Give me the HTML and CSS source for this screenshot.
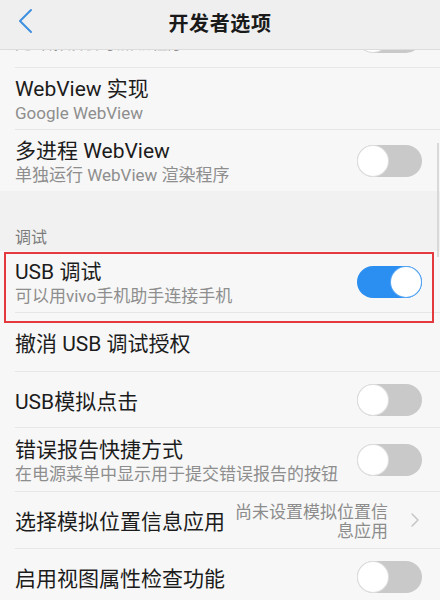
FILE: index.html
```html
<!DOCTYPE html>
<html lang="zh-CN">
<head>
<meta charset="utf-8">
<title>开发者选项</title>
<link rel="stylesheet" href="styles.css">
</head>
<body>
<header class="topbar">
  <span class="back">
    <svg width="16" height="26" viewBox="0 0 16 26"><path d="M13 2 L2 13 L13 24" fill="none" stroke="#3f8fe0" stroke-width="2" stroke-linecap="round" stroke-linejoin="round"/></svg>
  </span>
  <h1 class="title">开发者选项</h1>
</header>
<main class="viewport">
  <div class="list">
    <div class="row row-double r-top">
      <div class="text">
        <div class="label">OEM 解锁</div>
        <div class="desc">允许解锁引导加载程序</div>
      </div>
      <span class="switch"><span class="knob"></span></span>
    </div>
    <div class="row row-double">
      <div class="text">
        <div class="label">WebView 实现</div>
        <div class="desc">Google WebView</div>
      </div>
    </div>
    <div class="row row-double row-last">
      <div class="text">
        <div class="label">多进程 WebView</div>
        <div class="desc">单独运行 WebView 渲染程序</div>
      </div>
      <span class="switch"><span class="knob"></span></span>
    </div>
    <div class="section">调试</div>
    <div class="row row-double">
      <div class="text">
        <div class="label">USB 调试</div>
        <div class="desc">可以用vivo手机助手连接手机</div>
      </div>
      <span class="switch on"><span class="knob"></span></span>
    </div>
    <div class="row row-single r-revoke">
      <div class="text"><div class="label">撤消 USB 调试授权</div></div>
    </div>
    <div class="row row-single r-tap">
      <div class="text"><div class="label">USB模拟点击</div></div>
      <span class="switch"><span class="knob"></span></span>
    </div>
    <div class="row row-double r-bug">
      <div class="text">
        <div class="label">错误报告快捷方式</div>
        <div class="desc">在电源菜单中显示用于提交错误报告的按钮</div>
      </div>
      <span class="switch"><span class="knob"></span></span>
    </div>
    <div class="row row-single r-mock">
      <div class="text"><div class="label">选择模拟位置信息应用</div></div>
      <div class="value"><span class="vline">尚未设置模拟位置信</span><span class="vline">息应用</span></div>
      <span class="chev">
        <svg width="10" height="16" viewBox="0 0 10 16"><path d="M2 2 L8 8 L2 14" fill="none" stroke="#c6c6c6" stroke-width="1.5" stroke-linecap="round" stroke-linejoin="round"/></svg>
      </span>
    </div>
    <div class="row row-single">
      <div class="text"><div class="label">启用视图属性检查功能</div></div>
      <span class="switch"><span class="knob"></span></span>
    </div>
  </div>
</main>
<div class="highlight"></div>
<div class="scrollbar"></div>
</body>
</html>
```
FILE: styles.css
```css
* { box-sizing: border-box; }
html, body { margin: 0; padding: 0; }
body {
  width: 440px;
  height: 600px;
  overflow: hidden;
  position: relative;
  background: #f7f7f7;
  font-family: Roboto, "Noto Sans CJK SC", sans-serif;
  color: #1c1c1c;
}
.topbar {
  height: 50px;
  background: #efefef;
  border-bottom: 1px solid #dcdcdc;
  display: flex;
  align-items: center;
  justify-content: center;
  position: relative;
  z-index: 2;
  padding-bottom: 5px;
}
.back {
  position: absolute;
  left: 18px;
  top: 8px;
  display: flex;
}
.title {
  margin: 0;
  font-size: 20px;
  font-weight: 700;
  color: #1a1a1a;
  letter-spacing: 0.6px;
}
.viewport {
  height: 550px;
  overflow: hidden;
}
.list {
  margin-top: -44px;
}
.row {
  display: flex;
  align-items: center;
  margin-left: 15px;
  padding-right: 18px;
  border-bottom: 1px solid #e6e6e6;
  background: #f7f7f7;
}
.row-double { height: 62px; }
.row-single { height: 57px; }
.row-last { border-bottom: none; height: 61px; }
.r-revoke { height: 59px; }
.r-tap { height: 56px; }
.r-bug { height: 64px; }
.text {
  flex: 1;
  min-width: 0;
  display: flex;
  flex-direction: column;
  align-items: flex-start;
  padding-top: 4px;
}
.r-top .text { padding-top: 0; padding-bottom: 12px; }
.label {
  font-size: 21px;
  line-height: 24px;
  color: #1c1c1c;
}
.desc {
  font-size: 17px;
  line-height: 24px;
  color: #8e8e8e;
}
.section {
  height: 60px;
  background: #f1f1f1;
  margin: 0;
  padding: 38px 0 0 15px;
  font-size: 16px;
  line-height: 18px;
  color: #7c7c7c;
}
.switch {
  width: 65px;
  height: 32px;
  border-radius: 16px;
  background: #c9c9c9;
  display: flex;
  align-items: center;
  padding: 1px;
  flex: none;
}
.knob {
  width: 30px;
  height: 30px;
  border-radius: 50%;
  background: #ffffff;
  box-shadow: 0 0 0 1px #dedede;
}
.switch.on {
  background: #2b8ef1;
  justify-content: flex-end;
}
.switch.on .knob { box-shadow: 0 0 0 1px #5aa7f3; }
.value {
  display: flex;
  flex-direction: column;
  align-items: flex-end;
  gap: 1px;
  font-size: 17px;
  line-height: 18px;
  color: #8c8c8c;
  margin-right: 22px;
  padding-top: 2px;
}
.vline { display: block; }
.chev { display: flex; margin-right: 2px; }
.highlight {
  position: absolute;
  left: 4px;
  top: 252px;
  width: 430px;
  height: 71px;
  border: 2px solid #e4393f;
  z-index: 3;
}
.scrollbar {
  position: absolute;
  right: 1px;
  top: 143px;
  width: 2px;
  height: 114px;
  background: #d9d9d9;
  z-index: 3;
}
```
